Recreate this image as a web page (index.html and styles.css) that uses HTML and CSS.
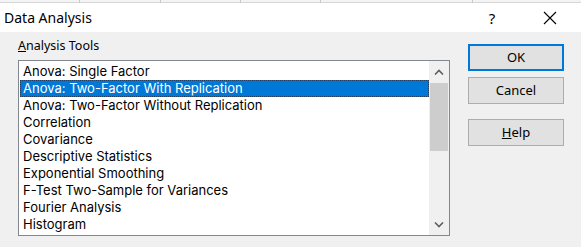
FILE: index.html
```html
<!DOCTYPE html>
<html>
<head>
<title>Data Analysis</title>
<link rel="stylesheet" href="styles.css">
</head>
<body>
<div class="sheet">
    <span class="cell w80"></span><span class="cell w81"></span><span class="cell w80"></span><span class="cell w80"></span><span class="cell w152"></span>
</div>
<div class="titlebar">
    <span class="title">Data Analysis</span>
    <span class="help">?</span>
    <span class="close">
        <svg width="14" height="14" viewBox="0 0 14 14"><path d="M1 1 L13 13 M13 1 L1 13" stroke="#000" stroke-width="1.1" fill="none"/></svg>
    </span>
</div>
<div class="client">
    <div class="left">
        <div class="label"><u>A</u>nalysis Tools</div>
        <div class="listbox">
            <div class="items">
                <div class="item">Anova: Single Factor</div>
                <div class="item selected">Anova: Two-Factor With Replication</div>
                <div class="item">Anova: Two-Factor Without Replication</div>
                <div class="item">Correlation</div>
                <div class="item">Covariance</div>
                <div class="item">Descriptive Statistics</div>
                <div class="item">Exponential Smoothing</div>
                <div class="item">F-Test Two-Sample for Variances</div>
                <div class="item">Fourier Analysis</div>
                <div class="item">Histogram</div>
            </div>
            <div class="scrollbar">
                <div class="arrow">
                    <svg width="10" height="6" viewBox="0 0 10 6"><path d="M1 5.5 L5 1.5 L9 5.5" stroke="#606060" stroke-width="1.6" fill="none"/></svg>
                </div>
                <div class="track"><div class="thumb"></div></div>
                <div class="arrow">
                    <svg width="10" height="6" viewBox="0 0 10 6"><path d="M1 0.5 L5 4.5 L9 0.5" stroke="#606060" stroke-width="1.6" fill="none"/></svg>
                </div>
            </div>
        </div>
    </div>
    <div class="buttons">
        <div class="btn default">OK</div>
        <div class="btn">Cancel</div>
        <div class="btn gap"><u>H</u>elp</div>
    </div>
</div>
</body>
</html>
```

FILE: styles.css
```css
body{
    margin: 0;
    width: 581px;
    height: 247px;
    background-color: #f0f0f0;
    font-family: "Noto Sans", "Open Sans", sans-serif;
    color: #000;
    overflow: hidden;
}
.sheet{
    height: 3px;
    background-color: #f3f3f3;
    border-bottom: 1px solid #d8d8d8;
    display: flex;
    box-sizing: border-box;
}
.cell{
    height: 3px;
    border-right: 1px solid #c8c8c8;
    box-sizing: border-box;
}
.w80{ width: 80px; }
.w81{ width: 81px; }
.w152{ width: 152px; }
.titlebar{
    height: 29px;
    background-color: #fff;
    display: flex;
    align-items: center;
}
.title{
    font-size: 14px;
    padding-left: 4px;
    flex: 1;
}
.help{
    font-size: 15px;
    width: 20px;
    margin-right: 41px;
    text-align: center;
}
.close{
    width: 14px;
    margin-right: 24px;
    display: flex;
}
.client{
    display: flex;
    padding: 6px 0 0 18px;
}
.left{
    width: 432px;
}
.label{
    font-size: 12.5px;
    height: 22px;
    line-height: 16px;
}
.listbox{
    height: 174px;
    border: 1px solid #828790;
    background-color: #fff;
    display: flex;
}
.items{
    flex: 1;
    padding: 2px 0 0 1px;
}
.item{
    height: 17px;
    line-height: 17px;
    font-family: Inter, "Noto Sans", sans-serif;
    font-size: 13px;
    padding-left: 3px;
    white-space: nowrap;
}
.selected{
    background-color: #0078d7;
    color: #fff;
    outline: 1px dotted #1e3e64;
    outline-offset: -1px;
}
.scrollbar{
    width: 20px;
    background-color: #f0f0f0;
    display: flex;
    flex-direction: column;
}
.arrow{
    height: 21px;
    display: flex;
    align-items: center;
    justify-content: center;
}
.track{
    flex: 1;
}
.thumb{
    height: 68px;
    margin: 1px 1px 0 1px;
    background-color: #cdcdcd;
}
.buttons{
    margin: 6px 0 0 18px;
    width: 96px;
    display: flex;
    flex-direction: column;
}
.btn{
    height: 25px;
    line-height: 25px;
    border: 1px solid #adadad;
    background-color: #e1e1e1;
    text-align: center;
    font-size: 13px;
    margin-bottom: 6px;
}
.default{
    border: 2px solid #0078d7;
    height: 23px;
    line-height: 23px;
}
.gap{
    margin-top: 9px;
}
```
